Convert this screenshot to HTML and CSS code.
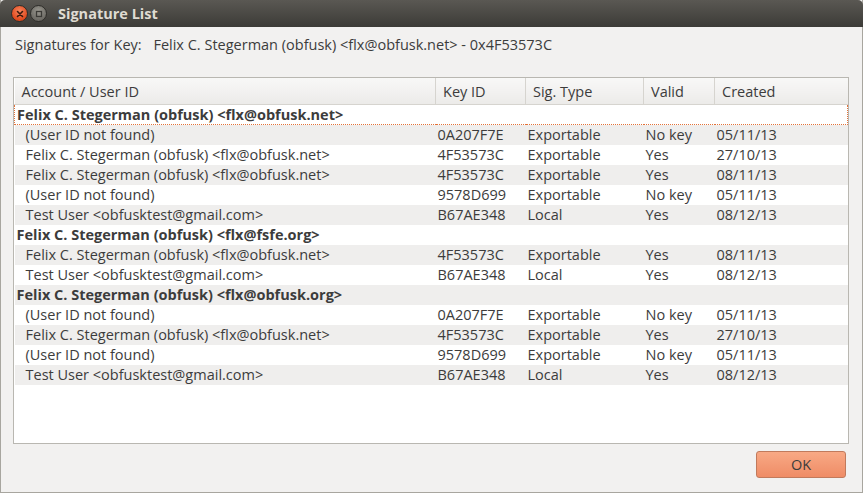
FILE: index.html
```html
<!DOCTYPE html>
<html lang="en">

<head>
    <meta charset="UTF-8">
    <title>Signature List</title>
    <link rel="stylesheet" href="styles.css">
</head>

<body>
    <div class="window">
        <div class="titlebar">
            <span class="wbtn close">
                <svg width="8" height="8" viewBox="0 0 8 8"><path d="M1.5 1.5 L6.5 6.5 M6.5 1.5 L1.5 6.5" stroke="#3a1a0e" stroke-width="1.6" stroke-linecap="round"/></svg>
            </span>
            <span class="wbtn minimize">
                <svg width="8" height="8" viewBox="0 0 8 8"><rect x="1.5" y="1.5" width="5" height="5" fill="none" stroke="#3b3a36" stroke-width="1.3"/></svg>
            </span>
            <span class="title">Signature List</span>
        </div>

        <div class="content">
            <p class="key-line">
                <span class="key-label">Signatures for Key:</span>
                <span>Felix C. Stegerman (obfusk) &lt;flx@obfusk.net&gt; - 0x4F53573C</span>
            </p>

            <div class="tree">
                <table>
                    <colgroup>
                        <col class="c-user">
                        <col class="c-key">
                        <col class="c-type">
                        <col class="c-valid">
                        <col class="c-created">
                    </colgroup>
                    <thead>
                        <tr>
                            <th>Account / User ID</th>
                            <th>Key ID</th>
                            <th>Sig. Type</th>
                            <th>Valid</th>
                            <th>Created</th>
                        </tr>
                    </thead>
                    <tbody id="rows"></tbody>
                </table>
            </div>

            <div class="actions">
                <button class="ok-btn">OK</button>
            </div>
        </div>
    </div>

    <script src="script.js"></script>
</body>

</html>
```

FILE: script.js
```javascript
const groups = [
    {
        name: 'Felix C. Stegerman (obfusk) <flx@obfusk.net>',
        sigs: [
            ['(User ID not found)', '0A207F7E', 'Exportable', 'No key', '05/11/13'],
            ['Felix C. Stegerman (obfusk) <flx@obfusk.net>', '4F53573C', 'Exportable', 'Yes', '27/10/13'],
            ['Felix C. Stegerman (obfusk) <flx@obfusk.net>', '4F53573C', 'Exportable', 'Yes', '08/11/13'],
            ['(User ID not found)', '9578D699', 'Exportable', 'No key', '05/11/13'],
            ['Test User <obfusktest@gmail.com>', 'B67AE348', 'Local', 'Yes', '08/12/13']
        ]
    },
    {
        name: 'Felix C. Stegerman (obfusk) <flx@fsfe.org>',
        sigs: [
            ['Felix C. Stegerman (obfusk) <flx@obfusk.net>', '4F53573C', 'Exportable', 'Yes', '08/11/13'],
            ['Test User <obfusktest@gmail.com>', 'B67AE348', 'Local', 'Yes', '08/12/13']
        ]
    },
    {
        name: 'Felix C. Stegerman (obfusk) <flx@obfusk.org>',
        sigs: [
            ['(User ID not found)', '0A207F7E', 'Exportable', 'No key', '05/11/13'],
            ['Felix C. Stegerman (obfusk) <flx@obfusk.net>', '4F53573C', 'Exportable', 'Yes', '27/10/13'],
            ['(User ID not found)', '9578D699', 'Exportable', 'No key', '05/11/13'],
            ['Test User <obfusktest@gmail.com>', 'B67AE348', 'Local', 'Yes', '08/12/13']
        ]
    }
];

const tbody = document.getElementById('rows');
let n = 0;

function addRow(cells, cls) {
    const tr = document.createElement('tr');
    tr.className = cls + (n % 2 ? ' odd' : '');
    if (n === 0) tr.classList.add('focused');
    cells.forEach(text => {
        const td = document.createElement('td');
        td.textContent = text;
        tr.appendChild(td);
    });
    tbody.appendChild(tr);
    n++;
}

groups.forEach(group => {
    addRow([group.name, '', '', '', ''], 'parent');
    group.sigs.forEach(sig => addRow(sig, 'child'));
});
```

FILE: styles.css
```css
body {
    margin: 0;
    font-family: "Open Sans", "DejaVu Sans", sans-serif;
    font-size: 14.5px;
    color: #3c3c3c;
    background-color: #3c3b37;
}

.window {
    width: 863px;
    height: 493px;
    box-sizing: border-box;
    border: 1px solid #a8a69f;
    border-top: none;
    background-color: #f2f1f0;
    display: flex;
    flex-direction: column;
}

.titlebar {
    height: 28px;
    margin: 0 -1px;
    background: linear-gradient(#5a5853, #3c3b37);
    border-radius: 5px 5px 0 0;
    display: flex;
    align-items: center;
    padding-left: 11px;
}

.wbtn {
    width: 17px;
    height: 17px;
    border-radius: 50%;
    display: flex;
    align-items: center;
    justify-content: center;
    margin-right: 2px;
    box-sizing: border-box;
}

.close {
    background: radial-gradient(circle at 50% 35%, #f7865f, #e0491d 70%);
    border: 1px solid #2f2e2a;
}

.minimize {
    background: radial-gradient(circle at 50% 35%, #9a9890, #6d6b65 70%);
    border: 1px solid #2f2e2a;
}

.title {
    margin-left: 9px;
    font-weight: bold;
    font-size: 14.5px;
    color: #dfdbd2;
}

.content {
    flex: 1;
    padding: 0 13px 14px 12px;
    display: flex;
    flex-direction: column;
}

.key-line {
    margin: 8px 0 0 2px;
    height: 20px;
    line-height: 20px;
    white-space: nowrap;
}

.key-label {
    margin-right: 8px;
}

.tree {
    margin-top: 22px;
    height: 367px;
    border: 1px solid #b9b7b1;
    background-color: #fff;
    box-sizing: border-box;
    overflow: hidden;
}

table {
    width: 833px;
    border-collapse: collapse;
    table-layout: fixed;
}

.c-user { width: 421px; }
.c-key { width: 90px; }
.c-type { width: 118px; }
.c-valid { width: 71px; }
.c-created { width: 133px; }

th {
    height: 25px;
    padding: 1px 0 0 7px;
    text-align: left;
    font-weight: normal;
    background: linear-gradient(#f8f8f7, #ecebe9);
    border-right: 1px solid #d6d4cf;
    border-bottom: 1px solid #d6d4cf;
    white-space: nowrap;
}

th:last-child {
    border-right: none;
}

td {
    height: 20px;
    padding: 0 0 0 2px;
    white-space: nowrap;
    overflow: hidden;
    line-height: 20px;
}

tr.odd td {
    background-color: #efeeed;
}

tr.parent td {
    font-weight: bold;
    padding-left: 2px;
}

tr.child td:first-child {
    padding-left: 11px;
}

tr.focused td {
    border-top: 1px dotted #e3733a;
    border-bottom: 1px dotted #e3733a;
    height: 19px;
    line-height: 19px;
}

tr.focused td:first-child {
    border-left: 1px dotted #e3733a;
}

tr.focused td:last-child {
    border-right: 1px dotted #e3733a;
}

.actions {
    display: flex;
    justify-content: flex-end;
    margin-top: 7px;
}

.ok-btn {
    width: 90px;
    height: 27px;
    margin-right: 3px;
    font-family: inherit;
    font-size: 14.5px;
    color: #3c3c3c;
    background: linear-gradient(#f8a985, #ef8c66);
    border: 1px solid #c17a5c;
    border-radius: 3px;
}
```
